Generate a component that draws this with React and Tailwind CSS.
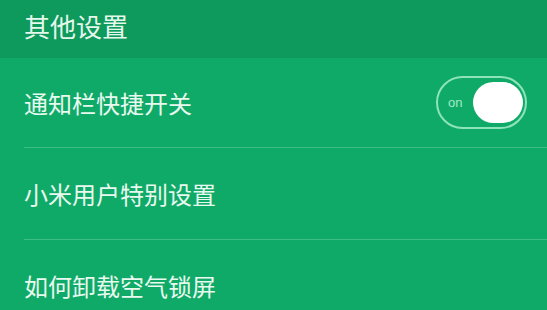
import React from "react"

const rowText = "text-[24px] leading-none text-[#e8f9ef]"

function Toggle() {
  return (
    <div className="flex h-[53px] w-[91px] items-center justify-between rounded-full border-2 border-[#8fe3bb] pl-[10px] pr-[2px]">
      <span className="text-[13px] leading-none text-[#a3eac8]" style={{ fontFamily: "'Liberation Sans', sans-serif" }}>on</span>
      <div className="h-[41px] w-[50px] rounded-full bg-white" />
    </div>
  )
}

export default function App() {
  return (
    <div
      className="flex h-[310px] w-[547px] flex-col overflow-hidden bg-[#10aa68]"
      style={{ fontFamily: "'Noto Sans CJK SC', 'Noto Sans', sans-serif" }}
    >
      <div className="flex h-[58px] shrink-0 items-center bg-[#0d9a5c] px-6 pb-[6px]">
        <span className="text-[26px] leading-none text-[#e6f7ec]">其他设置</span>
      </div>
      <div className="flex h-[89px] shrink-0 items-center justify-between pl-6 pr-[20px]">
        <span className={rowText}>通知栏快捷开关</span>
        <Toggle />
      </div>
      <div className="ml-6 h-px shrink-0 bg-[#3dbd85]" />
      <div className="flex h-[91px] shrink-0 items-center pl-6">
        <span className={rowText}>小米用户特别设置</span>
      </div>
      <div className="ml-6 h-px shrink-0 bg-[#3dbd85]" />
      <div className="flex h-[91px] shrink-0 items-center pl-6">
        <span className={rowText}>如何卸载空气锁屏</span>
      </div>
    </div>
  )
}
